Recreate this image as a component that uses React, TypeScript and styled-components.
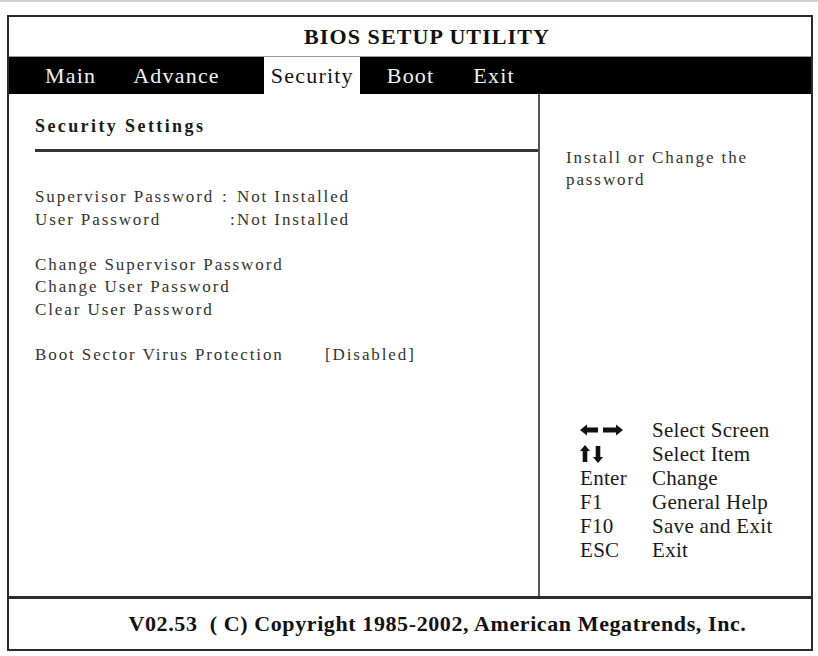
import React from "react";
import styled, { createGlobalStyle } from "styled-components";

const Global = createGlobalStyle`
  html, body { margin: 0; padding: 0; background: #fff; }
  body { font-family: "Liberation Serif", "Times New Roman", serif; color: #222; }
`;

const Page = styled.div`
  width: 818px;
  height: 656px;
  box-sizing: border-box;
  border-top: 2px solid #cfcfcf;
  padding: 13px 0 0 7px;
`;

const Frame = styled.div`
  width: 806px;
  height: 636px;
  box-sizing: border-box;
  border: 2px solid #2b2b2b;
  display: flex;
  flex-direction: column;
`;

const Title = styled.div`
  height: 39px;
  border-bottom: 1px solid #9a9a9a;
  display: flex;
  align-items: center;
  justify-content: center;
  padding-left: 34px;
  font-weight: bold;
  font-size: 22px;
  letter-spacing: 1.1px;
  color: #111;
`;

const MenuBar = styled.div`
  height: 37px;
  background: #000;
  display: flex;
  align-items: stretch;
`;

const Tab = styled.div<{ $active?: boolean; $offset: number }>`
  margin-left: ${(p) => p.$offset}px;
  padding: 0 6px 0 7px;
  display: flex;
  align-items: center;
  font-size: 22px;
  letter-spacing: 1.2px;
  background: ${(p) => (p.$active ? "#fff" : "transparent")};
  color: ${(p) => (p.$active ? "#111" : "#f2f2f2")};
`;

const Body = styled.div`
  flex: 1;
  display: flex;
`;

const LeftPanel = styled.div`
  width: 529px;
  border-right: 2px solid #555;
  padding-top: 21px;
  display: flex;
  flex-direction: column;
`;

const Heading = styled.div`
  margin-left: 26px;
  padding-bottom: 12px;
  border-bottom: 3px solid #333;
  font-weight: bold;
  font-size: 18px;
  line-height: 22px;
  letter-spacing: 2.4px;
  color: #1a1a1a;
`;

const List = styled.div`
  margin-top: 34px;
  padding-left: 26px;
  display: flex;
  flex-direction: column;
`;

const Row = styled.div<{ $cols?: string }>`
  display: grid;
  grid-template-columns: ${(p) => p.$cols || "1fr"};
  height: 22.5px;
  line-height: 22.5px;
  font-size: 17px;
  letter-spacing: 1.9px;
  color: #333;
  white-space: nowrap;
`;

const Spacer = styled.div`
  height: 22.5px;
`;

const RightPanel = styled.div`
  flex: 1;
  display: flex;
  flex-direction: column;
  justify-content: space-between;
  padding: 53px 0 34px 26px;
`;

const HelpText = styled.div`
  width: 210px;
  font-size: 17px;
  line-height: 22px;
  letter-spacing: 1.9px;
  color: #333;
`;

const Keys = styled.div`
  margin-left: 14px;
  display: grid;
  grid-template-columns: 72px auto;
  grid-auto-rows: 24px;
  align-items: center;
  font-size: 21px;
  color: #1a1a1a;
  letter-spacing: 0.3px;
`;

const KeyCell = styled.div`
  display: flex;
  align-items: center;
`;

const Footer = styled.div`
  height: 50px;
  border-top: 3px solid #2b2b2b;
  display: flex;
  align-items: center;
  justify-content: center;
  padding-left: 55px;
  font-weight: bold;
  font-size: 22px;
  letter-spacing: 0.6px;
  color: #111;
  white-space: pre;
`;

const LeftRight = () => (
  <svg width="44" height="12" viewBox="0 0 44 12">
    <path d="M0 6 L7 0.5 L7 3.5 L18 3.5 L18 8.5 L7 8.5 L7 11.5 Z" fill="#111" />
    <path d="M43 6 L36 0.5 L36 3.5 L23 3.5 L23 8.5 L36 8.5 L36 11.5 Z" fill="#111" />
  </svg>
);

const UpDown = () => (
  <svg width="26" height="18" viewBox="0 0 26 18">
    <path d="M5 0 L10 6 L7.3 6 L7.3 17 L2.7 17 L2.7 6 L0 6 Z" fill="#111" />
    <path d="M18 18 L23 12 L20.3 12 L20.3 1 L15.7 1 L15.7 12 L13 12 Z" fill="#111" />
  </svg>
);

const tabs = [
  { label: "Main", offset: 29 },
  { label: "Advance", offset: 24 },
  { label: "Security", offset: 38, active: true },
  { label: "Boot", offset: 20 },
  { label: "Exit", offset: 26 },
];

const keys: { key: React.ReactNode; desc: string }[] = [
  { key: <LeftRight />, desc: "Select Screen" },
  { key: <UpDown />, desc: "Select Item" },
  { key: "Enter", desc: "Change" },
  { key: "F1", desc: "General Help" },
  { key: "F10", desc: "Save and Exit" },
  { key: "ESC", desc: "Exit" },
];

export default function App() {
  return (
    <>
      <Global />
      <Page>
        <Frame>
          <Title>BIOS SETUP UTILITY</Title>
          <MenuBar>
            {tabs.map((t) => (
              <Tab key={t.label} $offset={t.offset} $active={t.active}>
                {t.label}
              </Tab>
            ))}
          </MenuBar>
          <Body>
            <LeftPanel>
              <Heading>Security Settings</Heading>
              <List>
                <Row $cols="187px 15px auto">
                  <span>Supervisor Password</span>
                  <span>:</span>
                  <span>Not Installed</span>
                </Row>
                <Row $cols="195px 7px auto">
                  <span>User Password</span>
                  <span>:</span>
                  <span>Not Installed</span>
                </Row>
                <Spacer />
                <Row>Change Supervisor Password</Row>
                <Row>Change User Password</Row>
                <Row>Clear User Password</Row>
                <Spacer />
                <Row $cols="290px auto">
                  <span>Boot Sector Virus Protection</span>
                  <span>[Disabled]</span>
                </Row>
              </List>
            </LeftPanel>
            <RightPanel>
              <HelpText>Install or Change the password</HelpText>
              <Keys>
                {keys.map((k, i) => (
                  <React.Fragment key={i}>
                    <KeyCell>{k.key}</KeyCell>
                    <div>{k.desc}</div>
                  </React.Fragment>
                ))}
              </Keys>
            </RightPanel>
          </Body>
          <Footer>V02.53  ( C) Copyright 1985-2002, American Megatrends, Inc.</Footer>
        </Frame>
      </Page>
    </>
  );
}
